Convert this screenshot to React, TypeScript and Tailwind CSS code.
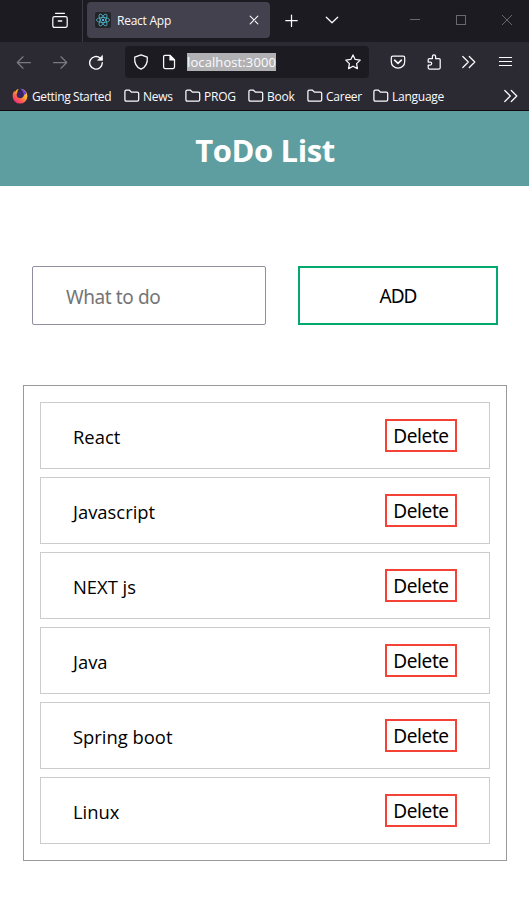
import React from 'react';

type IconProps = { className?: string; children: React.ReactNode; box?: string };

function Icon({ className = '', children, box = '0 0 16 16' }: IconProps) {
  return (
    <svg
      viewBox={box}
      className={`block shrink-0 ${className}`}
      fill="none"
      stroke="currentColor"
      strokeWidth="1.25"
      strokeLinecap="round"
      strokeLinejoin="round"
    >
      {children}
    </svg>
  );
}

function ReactLogo() {
  return (
    <svg viewBox="0 0 16 16" className="block h-4 w-4 shrink-0 rounded-[2px] bg-[#222428]" fill="none" stroke="#53b5cc" strokeWidth="0.8">
      <ellipse cx="8" cy="8" rx="6.6" ry="2.5" />
      <ellipse cx="8" cy="8" rx="6.6" ry="2.5" transform="rotate(60 8 8)" />
      <ellipse cx="8" cy="8" rx="6.6" ry="2.5" transform="rotate(120 8 8)" />
      <circle cx="8" cy="8" r="1.1" fill="#61dafb" stroke="none" />
    </svg>
  );
}

function FirefoxLogo() {
  return (
    <svg viewBox="0 0 16 16" className="block h-4 w-4 shrink-0">
      <defs>
        <linearGradient id="flame" x1="0.85" y1="0.1" x2="0.2" y2="0.9">
          <stop offset="0" stopColor="#ffe04a" />
          <stop offset="0.4" stopColor="#ffa436" />
          <stop offset="0.7" stopColor="#ff5a50" />
          <stop offset="1" stopColor="#f0307c" />
        </linearGradient>
      </defs>
      <path
        d="M2.200 3 3 3.900C3.700 2.400 5 1.300 6.700 1 5.600 2.200 5.300 3.300 5.600 4.300 4.200 5.700 4.400 8 5.700 9.200 7.800 11 11 10.200 11.800 7.700 12.400 5.400 11.400 3.200 9.400 1 13 1.600 15.400 4.600 15.400 8.200A7.400 7.400 0 0 1 8 15.600 7.400 7.400 0 0 1 .6 8.200C.6 6 1.100 4.500 2.200 3Z"
        fill="url(#flame)"
      />
      <path d="M8.200.4C11 .9 13.300 2.200 14.400 5L12.600 7.400C12.200 4.600 10.300 3.400 8.200.4Z" fill="#7542d8" />
      <circle cx="8.200" cy="6.500" r="3.100" fill="#35246b" />
    </svg>
  );
}

function FolderIcon() {
  return (
    <Icon className="h-4 w-4">
      <path d="M.9 3.600c0-.9.500-1.400 1.400-1.400h3.200l1.900 1.900h5.900c.9 0 1.400.5 1.400 1.400v6.200c0 .9-.5 1.400-1.400 1.400h-11c-.9 0-1.400-.5-1.400-1.400Z" />
    </Icon>
  );
}

function DoubleChevron({ className = '' }: { className?: string }) {
  return (
    <Icon className={`h-4 w-4 ${className}`}>
      <path d="M1.800 2.500 7.300 8l-5.500 5.500M8.300 2.500 13.800 8l-5.500 5.500" />
    </Icon>
  );
}

function TabBar() {
  return (
    <div className="flex h-[42px] items-start bg-[#1c1b22]">
      <Icon className="mt-3 ml-[52px] h-4 w-4">
        <path d="M3.500 1.300h9M2.600 4.600h10.800q1.800 0 1.800 1.800v7.200q0 1.800-1.800 1.800H2.600Q.8 15.400.8 13.600V6.400q0-1.800 1.800-1.800Z" />
        <path d="M6.300 9h3.400" strokeWidth="1.400" />
      </Icon>
      <div className="ml-[14px] h-[42px] w-px bg-[#3c3b45]" />
      <div className="mt-[2px] ml-1 flex h-9 w-[183px] items-center rounded bg-[#42414d] pr-[10px] pl-2">
        <ReactLogo />
        <span className="ml-[6px] flex-1 pt-[2px] text-[12px] tracking-[-0.25px] whitespace-nowrap">React App</span>
        <Icon className="h-3 w-3" box="0 0 12 12">
          <path d="m2.200 2.200 7.600 7.600m0-7.600-7.600 7.600" strokeWidth="1.100" />
        </Icon>
      </div>
      <Icon className="mt-[13px] ml-[14px] h-4 w-4">
        <path d="M7.500 2v11.400M1.800 7.700h11.400" />
      </Icon>
      <Icon className="mt-3 ml-6 h-4 w-4">
        <path d="m2.300 5.200 5.700 5.600 5.700-5.600" />
      </Icon>
      <div className="mt-[19px] ml-[70px] h-px w-[10px] bg-[#69686e]" />
      <div className="mt-[15px] ml-9 h-[10px] w-[10px] border border-[#69686e]" />
      <Icon className="mt-[15px] ml-9 h-[10px] w-[10px] text-[#69686e]" box="0 0 10 10">
        <path d="m0 0 10 10M10 0 0 10" strokeWidth="1" />
      </Icon>
    </div>
  );
}

function AddressBar() {
  return (
    <div className="ml-[21px] flex h-8 w-[244px] items-center rounded bg-[#1c1b22] pl-2">
      <Icon className="h-4 w-4">
        <path d="M8 .9 14.300 3.200C14.700 8.500 12.700 13.200 8 15.200 3.300 13.200 1.300 8.500 1.700 3.200Z" />
      </Icon>
      <Icon className="ml-3 h-4 w-4">
        <path d="M4 1.400h5l4.500 4.500v7.200c0 .9-.5 1.400-1.400 1.400H4c-.9 0-1.400-.5-1.400-1.400V2.800c0-.9.5-1.400 1.400-1.400Z" />
        <path d="M9 1.400v4.500h4.500Z" fill="currentColor" />
      </Icon>
      <span className="ml-[10px] h-[18px] w-[89px] bg-[#b1b1b3] text-[13px] leading-[19px] tracking-[0.1px] whitespace-nowrap">
        localhost:3000
      </span>
      <Icon className="ml-[69px] h-4 w-4">
        <path d="m8 .9 2.200 4.500 5 .7-3.600 3.500.8 5L8 12.200l-4.400 2.400.8-5L.8 6.100l5-.7Z" />
      </Icon>
    </div>
  );
}

function Toolbar() {
  return (
    <div className="flex h-10 items-center">
      <Icon className="ml-4 h-4 w-4 text-[#7b7a81]">
        <path d="M14.500 8.500h-13M7 2.800 1.300 8.500 7 14.200" />
      </Icon>
      <Icon className="ml-5 h-4 w-4 text-[#7b7a81]">
        <path d="M1.500 8.500h13M9 2.800l5.700 5.700L9 14.200" />
      </Icon>
      <Icon className="ml-5 h-4 w-4">
        <path d="M14.300 8.800A6.300 6.300 0 1 1 12.200 4.100L14 5.800" strokeWidth="1.400" />
        <path d="M14.400 1.800v4.400H10Z" fill="currentColor" strokeWidth="0.800" />
      </Icon>
      <AddressBar />
      <Icon className="ml-[21px] h-4 w-4">
        <path d="M2.800 2.200h10.400c.9 0 1.500.6 1.500 1.500v4c0 3.700-3 6.400-6.700 6.400S1.300 11.400 1.300 7.700v-4c0-.9.600-1.500 1.500-1.500Z" />
        <path d="M4.600 6.200 8 9.400l3.400-3.200" strokeWidth="1.600" />
      </Icon>
      <Icon className="ml-5 h-4 w-4">
        <path d="M2.200 5.800c0-.8.400-1.200 1.200-1.200h3V2.500a1.600 1.600 0 0 1 3.200 0v2.100h3.400c.8 0 1.200.4 1.200 1.200v8c0 .8-.4 1.200-1.200 1.200H3.400c-.8 0-1.200-.4-1.200-1.200v-2.700h2a1.500 1.500 0 0 0 0-3h-2Z" />
      </Icon>
      <DoubleChevron className="ml-[19px]" />
      <Icon className="ml-5 h-4 w-4">
        <path d="M2.500 3.500h12M2.500 7.500h12M2.500 11.500h12" strokeLinecap="square" strokeWidth="1.100" />
      </Icon>
    </div>
  );
}

const folders = [
  { label: 'News', width: 'w-[61px]' },
  { label: 'PROG', width: 'w-[63px]' },
  { label: 'Book', width: 'w-[59px]' },
  { label: 'Career', width: 'w-[66px]' },
  { label: 'Language', width: 'w-[130px]' },
];

function Bookmarks() {
  return (
    <div className="flex h-7 items-center pl-3 text-[12px] tracking-[-0.25px] whitespace-nowrap">
      <FirefoxLogo />
      <span className="w-24 pt-[2px] pl-1 tracking-[-0.38px]">Getting Started</span>
      {folders.map((f) => (
        <div key={f.label} className={`flex shrink-0 items-center ${f.width}`}>
          <FolderIcon />
          <span className="pt-[2px] pl-[3px]">{f.label}</span>
        </div>
      ))}
      <DoubleChevron />
    </div>
  );
}

const todos = ['React', 'Javascript', 'NEXT js', 'Java', 'Spring boot', 'Linux'];

export default function App() {
  return (
    <div className="h-[912px] w-[529px] overflow-hidden bg-white font-['Open_Sans','Noto_Sans',sans-serif] text-black">
      <div className="h-[111px] border-b border-[#0c0c0d] bg-[#2b2a33] text-[#fbfbfe]">
        <TabBar />
        <Toolbar />
        <Bookmarks />
      </div>

      <header className="flex h-[75px] items-center justify-center bg-[#5f9ea0]">
        <h1 className="pt-1 pl-[1px] text-[31px] leading-[43px] font-bold tracking-[-0.4px] text-white">ToDo List</h1>
      </header>

      <form className="mt-20 flex gap-8 pl-8 font-['Noto_Sans',sans-serif]" onSubmit={(e) => e.preventDefault()}>
        <input
          placeholder="What to do"
          className="h-[59px] w-[234px] rounded-[2px] border border-[#8f8f9d] px-[33px] pt-[2px] text-[19px] tracking-[-0.4px] placeholder:text-[#757575]"
        />
        <button className="h-[59px] w-[200px] border-2 border-[#04aa6d] pt-[2px] text-[19px] tracking-[-0.9px]">ADD</button>
      </form>

      <ul className="mt-[60px] ml-[23px] flex h-[476px] w-[484px] flex-col gap-2 border border-[#999999] p-4">
        {todos.map((todo) => (
          <li key={todo} className="flex h-[67px] items-center justify-between border border-[#cccccc] px-8">
            <span className="pt-[3px] text-[18.4px]">{todo}</span>
            <button className="h-[33px] w-[72px] border-2 border-[#f44336] font-['Noto_Sans',sans-serif] text-[19px] leading-[31px] tracking-[-0.4px]">
              Delete
            </button>
          </li>
        ))}
      </ul>
    </div>
  );
}
